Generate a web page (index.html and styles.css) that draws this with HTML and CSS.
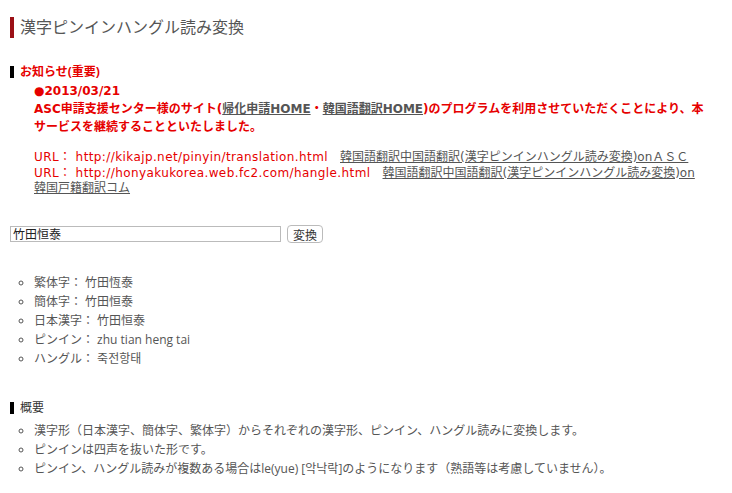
FILE: index.html
```html
<!DOCTYPE html>
<html lang="ja">

<head>
    <meta charset="UTF-8">
    <meta name="viewport" content="width=device-width, initial-scale=1.0">
    <title>漢字ピンインハングル読み変換</title>
    <link rel="stylesheet" href="styles.css">
</head>

<body>
    <h1 class="page-title">漢字ピンインハングル読み変換</h1>

    <h2 class="section-head notice-head">お知らせ(重要)</h2>
    <div class="notice">
        <p class="notice-main">
            ●2013/03/21<br>
            ASC申請支援センター様のサイト(<a href="#">帰化申請HOME</a>・<a href="#">韓国語翻訳HOME</a>)のプログラムを利用させていただくことにより、本サービスを継続することといたしました。
        </p>
        <p class="notice-urls">
            <span class="url">URL： http://kikajp.net/pinyin/translation.html</span>　<a href="#">韓国語翻訳中国語翻訳(漢字ピンインハングル読み変換)onＡＳＣ</a><br>
            <span class="url">URL： http://honyakukorea.web.fc2.com/hangle.html</span>　<a href="#">韓国語翻訳中国語翻訳(漢字ピンインハングル読み変換)on韓国戸籍翻訳コム</a>
        </p>
    </div>

    <form class="convert-form" onsubmit="return false;">
        <input type="text" class="convert-input" value="竹田恒泰">
        <button type="submit" class="convert-button">変換</button>
    </form>

    <ul class="result-list">
        <li>繁体字： 竹田恆泰</li>
        <li>簡体字： 竹田恒泰</li>
        <li>日本漢字： 竹田恒泰</li>
        <li>ピンイン： zhu tian heng tai</li>
        <li>ハングル： 죽전항태</li>
    </ul>

    <h2 class="section-head">概要</h2>
    <ul class="about-list">
        <li>漢字形（日本漢字、簡体字、繁体字）からそれぞれの漢字形、ピンイン、ハングル読みに変換します。</li>
        <li>ピンインは四声を抜いた形です。</li>
        <li>ピンイン、ハングル読みが複数ある場合はle(yue) [악낙락]のようになります（熟語等は考慮していません）。</li>
    </ul>
</body>

</html>
```

FILE: styles.css
```css
body {
    font-family: "Open Sans", "Noto Sans CJK JP", sans-serif;
    font-size: 12px;
    color: #555;
    background: #fff;
    margin: 0;
    padding: 0 10px;
}

.page-title {
    margin: 17px 0 0;
    padding-left: 6px;
    border-left: 4px solid #9b1016;
    font-size: 16px;
    line-height: 21px;
    font-weight: normal;
    color: #555;
}

.section-head {
    margin: 28px 0 0;
    padding-left: 6px;
    border-left: 4px solid #000;
    font-size: 12px;
    line-height: 12px;
    font-weight: normal;
    color: #333;
}

.notice-head {
    color: #e60000;
    font-weight: bold;
}

.notice {
    max-width: 672px;
    padding-left: 24px;
    margin-top: 4px;
    font-family: "DejaVu Sans", "Noto Sans CJK JP", sans-serif;
    color: #e60000;
}

.notice p {
    margin: 0;
}

.notice a {
    color: #555;
}

.notice-main {
    font-weight: bold;
    line-height: 18px;
}

.notice-urls {
    line-height: 15.5px;
    padding-top: 14px;
}

.url {
    letter-spacing: 0.4px;
}

.convert-form {
    display: flex;
    align-items: center;
    gap: 6px;
    margin-top: 28px;
}

.convert-input {
    width: 271px;
    height: 16px;
    box-sizing: border-box;
    border: 1px solid #bbb;
    padding: 0 2px;
    font-family: inherit;
    font-size: 12px;
    color: #222;
}

.convert-button {
    width: 36px;
    height: 18px;
    padding: 0;
    border: 1px solid #bbb;
    border-radius: 4px;
    background: #fff;
    font-family: inherit;
    font-size: 12px;
    color: #333;
}

.result-list,
.about-list {
    list-style: circle;
    margin: 0;
    padding-left: 24px;
    line-height: 19px;
}

.result-list {
    margin-top: 30px;
}

.about-list {
    margin-top: 7px;
}

.result-list + .section-head {
    margin-top: 34px;
}
```
